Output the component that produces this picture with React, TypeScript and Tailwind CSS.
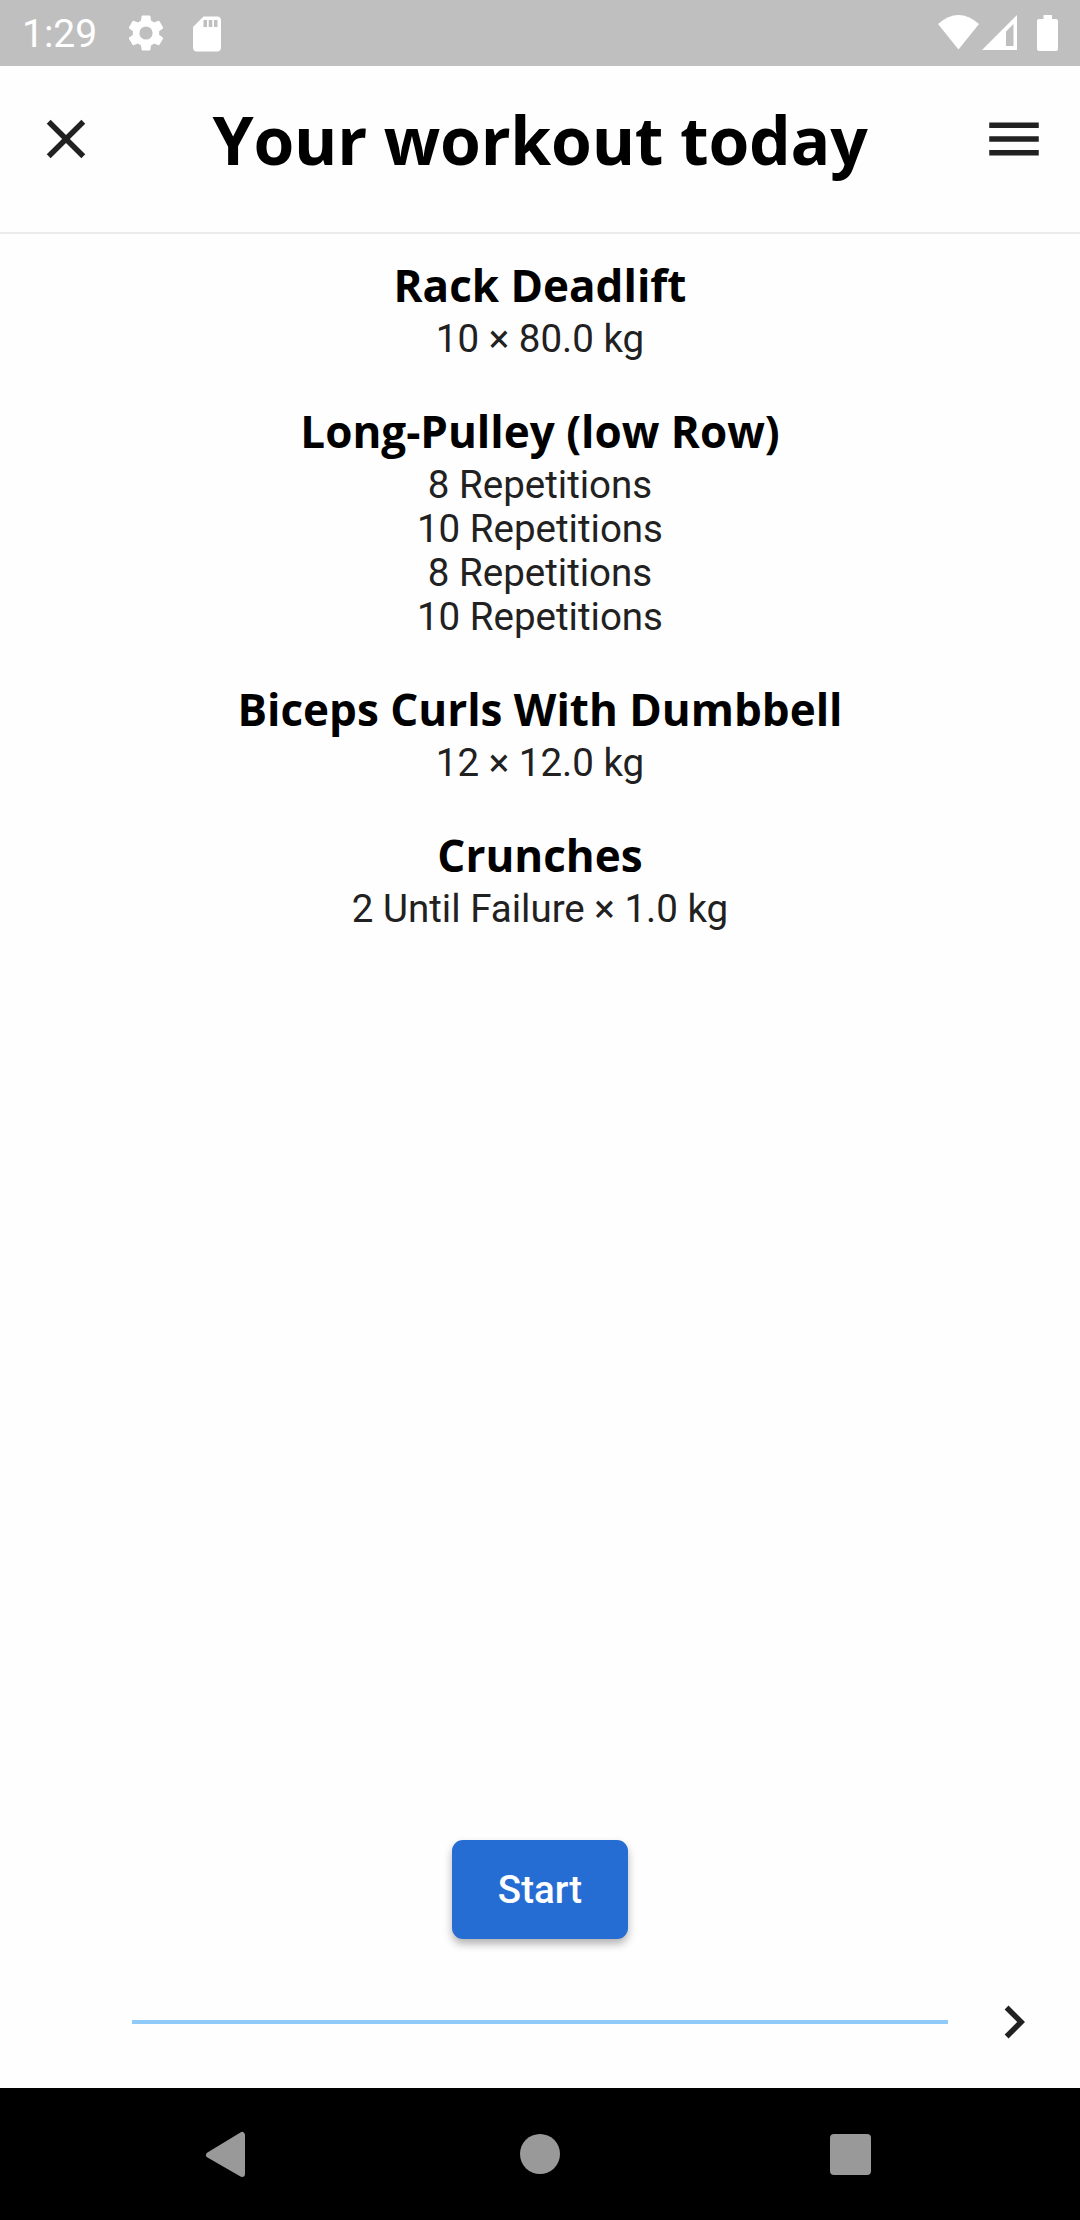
const exercises = [
  { name: 'Rack Deadlift', sets: ['10 × 80.0 kg'] },
  { name: 'Long-Pulley (low Row)', sets: ['8 Repetitions', '10 Repetitions', '8 Repetitions', '10 Repetitions'] },
  { name: 'Biceps Curls With Dumbbell', sets: ['12 × 12.0 kg'] },
  { name: 'Crunches', sets: ['2 Until Failure × 1.0 kg'] },
];

export default function App() {
  return (
    <div className="flex h-[2220px] w-[1080px] flex-col bg-[#fefefe] font-['Roboto',sans-serif]">
      <div className="flex h-[66px] shrink-0 items-center bg-[#bfbfbf] pl-[22px] text-white">
        <span className="w-[102px] pt-[2px] text-[39px] leading-[66px]">1:29</span>
        <svg className="size-[44px]" viewBox="0 0 24 24" fill="currentColor"><path d="M19.14 12.94c.04-.3.06-.61.06-.94 0-.32-.02-.64-.07-.94l2.03-1.58a.49.49 0 0 0 .12-.61l-1.92-3.32a.488.488 0 0 0-.59-.22l-2.39.96c-.5-.38-1.03-.7-1.62-.94l-.36-2.54a.484.484 0 0 0-.48-.41h-3.84c-.24 0-.43.17-.47.41l-.36 2.54c-.59.24-1.13.57-1.62.94l-2.39-.96c-.22-.08-.47 0-.59.22L2.74 8.87c-.12.21-.08.47.12.61l2.03 1.58c-.05.3-.09.63-.09.94s.02.64.07.94l-2.03 1.58a.49.49 0 0 0-.12.61l1.92 3.32c.12.22.37.29.59.22l2.39-.96c.5.38 1.03.7 1.62.94l.36 2.54c.05.24.24.41.48.41h3.84c.24 0 .44-.17.47-.41l.36-2.54c.59-.24 1.13-.56 1.62-.94l2.39.96c.22.08.47 0 .59-.22l1.92-3.32c.12-.22.07-.47-.12-.61l-2.01-1.58zM12 15.6A3.6 3.6 0 1 1 12 8.4a3.6 3.6 0 0 1 0 7.2z" /></svg>
        <svg className="ml-[18px] mt-px size-[42px]" viewBox="0 0 24 24" fill="currentColor"><path d="M18 2h-8L4.02 8 4 20c0 1.1.9 2 2 2h12c1.1 0 2-.9 2-2V4c0-1.1-.9-2-2-2zm-6 6h-2V4h2v4zm3 0h-2V4h2v4zm3 0h-2V4h2v4z" /></svg>
        <svg className="ml-auto h-[66px] w-[150px]" viewBox="930 0 150 66" fill="currentColor"><path d="M938 24Q958.500 6 979 24L958.500 49.500Z" /><path fillRule="evenodd" d="M1017 15V50H982ZM1013.500 24 1006 31.500V46H1013.500Z" /><path d="M1043.500 15H1052V19H1056Q1058 19 1058 21V49Q1058 51 1056 51H1039Q1037 51 1037 49V21Q1037 19 1039 19H1043.500Z" /></svg>
      </div>
      <header className="flex h-[168px] shrink-0 items-start border-b-2 border-[#ebebeb] px-[33px]">
        <svg className="mt-[40px] size-[66px]" viewBox="0 0 24 24" fill="#212121"><path d="M19 6.410 17.590 5 12 10.590 6.410 5 5 6.410 10.590 12 5 17.590 6.410 19 12 13.410 17.590 19 19 17.590 13.410 12z" /></svg>
        <h1 className="flex-1 pt-[28px] text-center font-['Open_Sans'] text-[66px] font-bold leading-[90px] tracking-[-0.25px]">Your workout today</h1>
        <svg className="mt-[40px] size-[66px]" viewBox="0 0 24 24" fill="#212121"><path d="M3 18h18v-2H3v2zm0-5h18v-2H3v2zm0-7v2h18V6H3z" /></svg>
      </header>
      <main className="flex flex-1 flex-col items-center pt-[19px] text-center">
        {exercises.map((e) => (
          <section key={e.name} className="mb-[38px]">
            <h2 className="font-['Open_Sans'] text-[44px] font-bold leading-[64px]">{e.name}</h2>
            {e.sets.map((s, i) => <p key={i} className="text-[38.5px] leading-[44px] text-[#212121]">{s}</p>)}
          </section>
        ))}
        <button className="mb-[17px] mt-auto h-[99px] w-[176px] rounded-[11px] bg-[#266dd3] text-[38.5px] font-medium text-white shadow-[0_5px_8px_rgba(0,0,0,0.3)]">Start</button>
      </main>
      <div className="flex h-[132px] shrink-0 items-center pl-[132px]">
        <div className="h-1 w-[816px] bg-[#90caf9]" />
        <svg className="ml-[33px] size-[66px]" viewBox="0 0 24 24" fill="#212121"><path d="M10 6 8.590 7.410 13.170 12l-4.580 4.590L10 18l6-6z" /></svg>
      </div>
      <nav className="h-[132px] shrink-0 bg-black">
        <svg className="size-full" viewBox="0 0 1080 132" fill="#999"><path d="M209 67 242 47V86Z" stroke="#999" strokeWidth="6" strokeLinejoin="round" /><circle cx="540" cy="66" r="20" /><rect x="830" y="46" width="41" height="41" rx="4" /></svg>
      </nav>
    </div>
  );
}
